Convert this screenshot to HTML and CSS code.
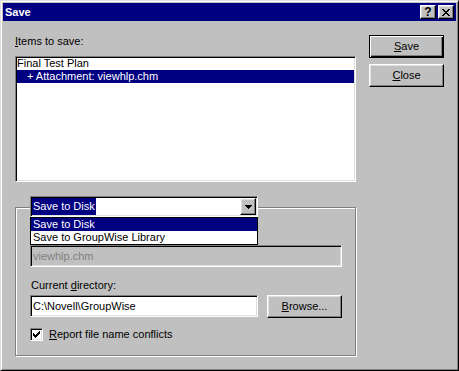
FILE: index.html
```html
<!DOCTYPE html>
<html lang="en">
<head>
    <meta charset="UTF-8">
    <meta name="viewport" content="width=device-width, initial-scale=1.0">
    <title>Save</title>
    <link rel="stylesheet" href="styles.css">
</head>
<body>
    <div class="window">
        <div class="title-bar">
            <span class="title">Save</span>
            <div class="title-buttons">
                <button class="title-btn raised help">?</button>
                <button class="title-btn raised">
                    <svg width="8" height="7" viewBox="0 0 8 7" shape-rendering="crispEdges"><path d="M0 0h2v1h-2zM6 0h2v1h-2zM1 1h2v1h-2zM5 1h2v1h-2zM2 2h4v1h-4zM3 3h2v1h-2zM2 4h4v1h-4zM1 5h2v1h-2zM5 5h2v1h-2zM0 6h2v1h-2zM6 6h2v1h-2z"/></svg>
                </button>
            </div>
        </div>

        <div class="dialog-body">
            <div class="main-col">
                <div class="field-label"><u>I</u>tems to save:</div>
                <ul class="item-list sunken">
                    <li>Final Test Plan</li>
                    <li class="child selected">+ Attachment: viewhlp.chm</li>
                </ul>

                <div class="group-box">
                    <div class="combo sunken">
                        <span class="combo-value">Save to Disk</span>
                        <span class="combo-arrow raised">
                            <svg width="7" height="4" viewBox="0 0 7 4" shape-rendering="crispEdges"><path d="M0 0h7v1h-1v1h-1v1h-1v1h-1v-1h-1v-1h-1v-1h-1z"/></svg>
                        </span>
                        <ul class="combo-list">
                            <li class="selected">Save to Disk</li>
                            <li>Save to GroupWise Library</li>
                        </ul>
                    </div>

                    <!-- file name label sits under the open drop-down -->
                    <div class="field-label spaced"></div>
                    <div class="text-field sunken disabled wide">viewhlp.chm</div>

                    <div class="field-label spaced">Current <u>d</u>irectory:</div>
                    <div class="field-row">
                        <div class="text-field sunken">C:\Novell\GroupWise</div>
                        <button class="btn raised browse"><u>B</u>rowse...</button>
                    </div>

                    <div class="check-row">
                        <span class="checkbox sunken">
                            <svg width="7" height="7" viewBox="0 0 7 7" shape-rendering="crispEdges"><path d="M6 0h1v1h-1zM5 1h2v1h-2zM0 2h1v1h-1zM4 2h3v1h-3zM0 3h2v1h-2zM3 3h3v1h-3zM0 4h5v1h-5zM1 5h3v1h-3zM2 6h1v1h-1z"/></svg>
                        </span>
                        <span><u>R</u>eport file name conflicts</span>
                    </div>
                </div>
            </div>

            <div class="side-col">
                <button class="btn default"><u>S</u>ave</button>
                <button class="btn raised"><u>C</u>lose</button>
            </div>
        </div>
    </div>
</body>
</html>
```

FILE: styles.css
```css
* {
    box-sizing: border-box;
}
body {
    margin: 0;
    font-family: 'Liberation Sans', Arial, sans-serif;
    font-size: 11px;
    line-height: 13px;
    color: #000;
    background: #c0c0c0;
}
ul {
    list-style: none;
    margin: 0;
    padding: 0;
}
button {
    font: inherit;
    color: #000;
    background: #c0c0c0;
    padding: 0;
    margin: 0;
}

/* 3d edges */
.raised {
    border: 1px solid;
    border-color: #fff #000 #000 #fff;
    box-shadow: inset -1px -1px #808080, inset 1px 1px #dfdfdf;
}
.sunken {
    border: 1px solid;
    border-color: #808080 #fff #fff #808080;
    box-shadow: inset 1px 1px #000, inset -1px -1px #dfdfdf;
}

.window {
    width: 459px;
    height: 371px;
    background: #c0c0c0;
    border: 1px solid;
    border-color: #dfdfdf #000 #000 #dfdfdf;
    box-shadow: inset 1px 1px #fff, inset -1px -1px #808080;
    padding: 2px;
}
.title-bar {
    height: 18px;
    background: #000080;
    color: #fff;
    display: flex;
    align-items: center;
    justify-content: space-between;
    padding: 0 2px;
}
.title {
    font-weight: bold;
}
.title-buttons {
    display: flex;
    gap: 2px;
}
.title-btn {
    width: 16px;
    height: 14px;
    display: flex;
    align-items: center;
    justify-content: center;
}
.title-btn.help {
    font-weight: bold;
    font-size: 12px;
    line-height: 12px;
}

.dialog-body {
    display: flex;
    padding: 14px 0 0 12px;
}
.main-col {
    width: 341px;
}
.side-col {
    margin-left: 13px;
    width: 75px;
    display: flex;
    flex-direction: column;
    gap: 6px;
}

.btn {
    width: 75px;
    height: 23px;
    text-align: center;
}
.btn.default {
    border: 1px solid #000;
    box-shadow: inset 1px 1px #fff, inset -1px -1px #000, inset -2px -2px #808080;
}

.field-label {
    height: 13px;
}
.field-label.spaced {
    margin: 12px 0 3px 1px;
}

.item-list {
    margin-top: 8px;
    height: 126px;
    background: #fff;
    padding: 0 1px 1px 1px;
}
.item-list li {
    height: 13px;
}
.item-list li.child {
    padding-left: 10px;
}
.selected {
    background: #000080;
    color: #fff;
}

.group-box {
    margin-top: 25px;
    height: 149px;
    border: 1px solid #808080;
    box-shadow: inset 1px 1px #fff, 1px 1px #fff;
    padding-left: 14px;
}

.combo {
    position: relative;
    width: 228px;
    height: 21px;
    margin-top: -12px;
    padding: 1px;
    background: #fff;
    display: flex;
    justify-content: space-between;
}
.combo-value {
    background: #000080;
    color: #fff;
    line-height: 17px;
    padding: 0 1px;
}
.combo-arrow {
    width: 16px;
    height: 17px;
    background: #c0c0c0;
    display: flex;
    align-items: center;
    justify-content: center;
}
.combo-list {
    position: absolute;
    top: calc(100% + 1px);
    left: -1px;
    width: 228px;
    background: #fff;
    border: 1px solid #000;
    z-index: 2;
}
.combo-list li {
    height: 13px;
    padding-left: 2px;
}

.text-field {
    width: 228px;
    height: 22px;
    background: #fff;
    line-height: 20px;
    padding: 0 2px;
}
.text-field.wide {
    width: 312px;
}
.text-field.disabled {
    background: #c0c0c0;
    color: #808080;
}

.field-row {
    display: flex;
    align-items: flex-start;
}
.browse {
    margin-left: 9px;
}

.check-row {
    margin-top: 10px;
    display: flex;
    align-items: center;
    gap: 6px;
    height: 13px;
}
.checkbox {
    width: 13px;
    height: 13px;
    background: #fff;
    display: flex;
    align-items: center;
    justify-content: center;
}
```
